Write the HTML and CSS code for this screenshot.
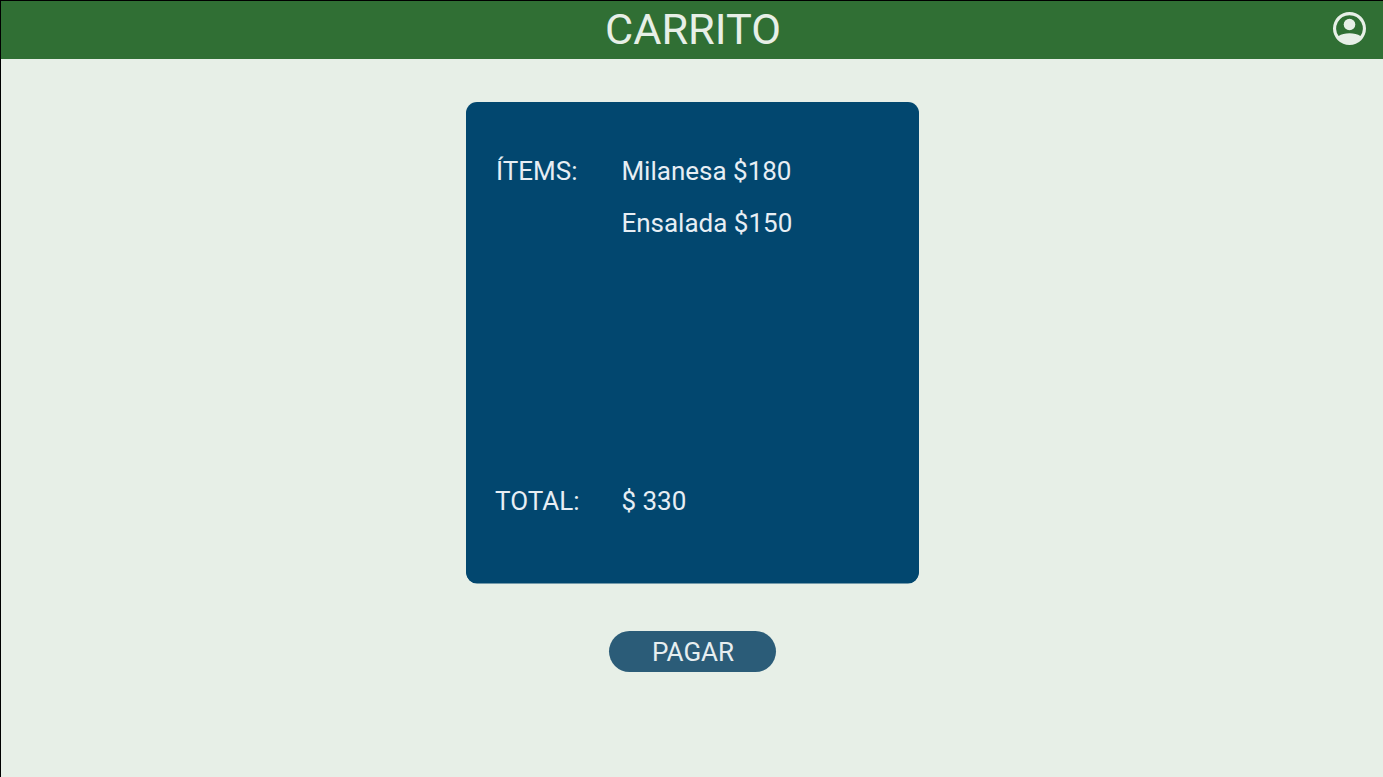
FILE: index.html
```html
<!DOCTYPE html>
<html lang="es">
<head>
<meta charset="utf-8">
<title>Carrito</title>
<link rel="stylesheet" href="styles.css">
</head>
<body>
<header class="topbar">
<h1 class="title">CARRITO</h1>
<svg class="account" viewBox="0 0 33 33" aria-hidden="true">
<path fill="currentColor" fill-rule="evenodd" d="M16.500 0a16.500 16.500 0 1 0 0 33a16.500 16.500 0 0 0 0-33zM16.500 3.200a13.300 13.300 0 0 1 10.900 20.900Q23.200 21.300 16.500 21.300T5.600 24.100A13.300 13.300 0 0 1 16.500 3.200z"/>
<circle cx="16.500" cy="12.500" r="5.800" fill="currentColor"/>
</svg>
</header>
<main class="content">
<section class="card">
<div class="row">
<span class="label">ÍTEMS:</span>
<ul class="items"><li>Milanesa $180</li><li>Ensalada $150</li></ul>
</div>
<div class="row">
<span class="label label-total">TOTAL:</span>
<span class="amount">$ 330</span>
</div>
</section>
<button class="pay">PAGAR</button>
</main>
</body>
</html>
```
FILE: styles.css
```css
* { box-sizing: border-box; }
body {
  margin: 0;
  height: 777px;
  overflow: hidden;
  background: #e7efe7;
  border-left: 1px solid #000;
  border-top: 1px solid #000;
  font-family: Roboto, sans-serif;
  color: #e7efe7;
}
.topbar {
  display: grid;
  grid-template-columns: 1fr auto 1fr;
  align-items: center;
  height: 58px;
  padding-right: 17px;
  padding-left: 19px;
  background: #306f34;
}
.title {
  grid-column: 2;
  margin: 0;
  font-size: 43.3px;
  font-weight: 400;
  line-height: 58px;
}
.account { width: 33px; height: 33px; justify-self: end; margin-top: -3px; }
.content { display: flex; flex-direction: column; align-items: center; padding: 43px 0 0 1px; }
.card {
  display: flex;
  flex-direction: column;
  justify-content: space-between;
  width: 453px;
  height: 481px;
  padding: 43px 30px 56px;
  border-radius: 11px;
  background: #02476f;
  box-shadow: 0 1px 0 -0.5px #02476f;
  color: #e7eef4;
  font-size: 26px;
  line-height: 52px;
}
.row { display: grid; grid-template-columns: 125.400px 1fr; }
.label-total { margin-left: -1px; }
.items { margin: 0; padding: 0; list-style: none; }
.pay {
  width: 167px;
  height: 41px;
  margin-top: 48px;
  padding: 1px 0 0 1px;
  border: 0;
  border-radius: 21px;
  background: #2b5c78;
  color: #e7eef0;
  font: 26px/40px Roboto, sans-serif;
}
```
